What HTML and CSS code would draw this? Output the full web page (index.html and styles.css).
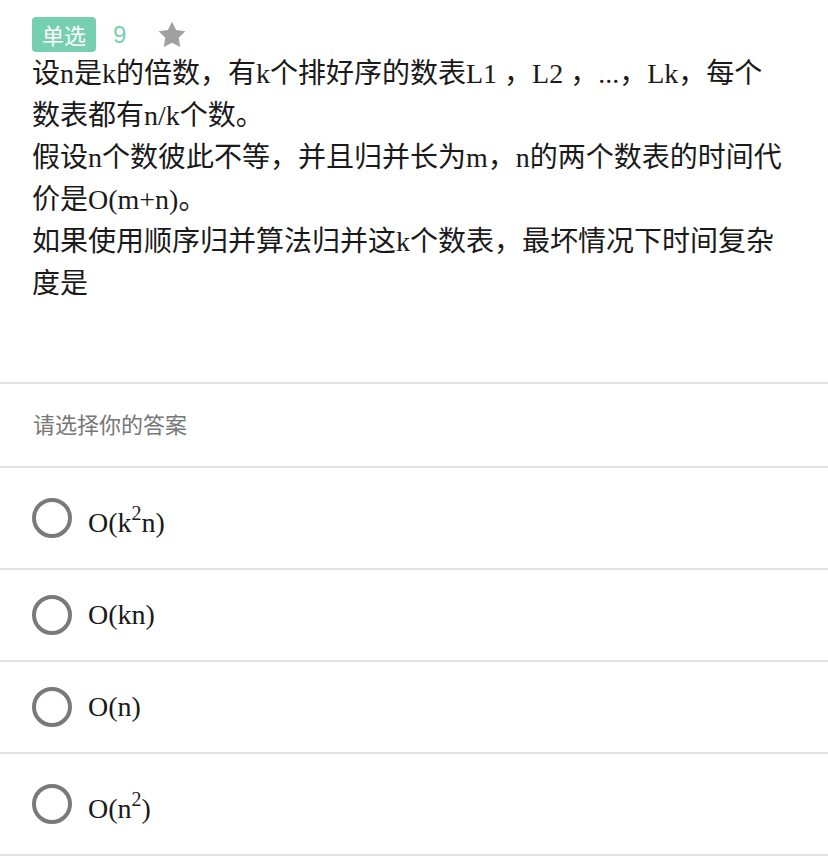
FILE: index.html
```
<!DOCTYPE html>
<html lang="zh">
<head>
<meta charset="utf-8">
<link rel="stylesheet" href="styles.css">
</head>
<body>
<section class="question">
  <div class="head">
    <span class="tag">单选</span>
    <span class="num">9</span>
    <svg class="star" viewBox="0 0 24 24" width="32" height="32"><path d="M12 2l3.09 6.26L22 9.27l-5 4.87 1.18 6.88L12 17.77l-6.18 3.25L7 14.14 2 9.27l6.91-1.01L12 2z" fill="#a0a0a0"/></svg>
  </div>
  <div class="stem">
    <p>设n是k的倍数，有k个排好序的数表L1 ，L2 ，...，Lk，每个数表都有n/k个数。</p>
    <p>假设n个数彼此不等，并且归并长为m，n的两个数表的时间代价是O(m+n)。</p>
    <p>如果使用顺序归并算法归并这k个数表，最坏情况下时间复杂度是</p>
  </div>
</section>
<div class="prompt">请选择你的答案</div>
<ul class="options">
  <li class="option"><span class="radio"></span><span class="label">O(k<sup>2</sup>n)</span></li>
  <li class="option"><span class="radio"></span><span class="label">O(kn)</span></li>
  <li class="option"><span class="radio"></span><span class="label">O(n)</span></li>
  <li class="option"><span class="radio"></span><span class="label">O(n<sup>2</sup>)</span></li>
</ul>
</body>
</html>
```
FILE: styles.css
```
* { box-sizing: border-box; }
body {
  margin: 0;
  background: #fff;
  font-family: "Liberation Serif", "Noto Sans CJK SC", serif;
  color: #1a1a1a;
}
.question {
  padding: 17px 40px 77px 32px;
  border-bottom: 2px solid #e2e2e2;
}
.head {
  display: flex;
  align-items: center;
  height: 35px;
  margin-bottom: 1px;
}
.tag {
  background: #77cfb1;
  color: #fff;
  font-family: "Noto Sans CJK SC", sans-serif;
  font-size: 22px;
  line-height: 35px;
  height: 35px;
  padding: 0 10px;
  border-radius: 4px;
}
.num {
  color: #77cfb1;
  font-family: "Liberation Sans", sans-serif;
  font-size: 24px;
  margin-left: 17px;
}
.star {
  margin-left: 30px;
}
.stem {
  font-size: 28px;
  line-height: 42px;
}
.stem p { margin: 0; }
.prompt {
  font-family: "Noto Sans CJK SC", sans-serif;
  font-size: 22px;
  color: #777;
  line-height: 30px;
  padding: 24px 33px 28px;
  border-bottom: 2px solid #e2e2e2;
}
.options {
  list-style: none;
  margin: 0;
  padding: 0;
}
.option {
  display: flex;
  align-items: center;
  padding: 25px 32px;
  border-bottom: 2px solid #e2e2e2;
}
.radio {
  width: 40px;
  height: 40px;
  border: 4px solid #7a7a7a;
  border-radius: 50%;
  flex: none;
}
.label {
  margin-left: 16px;
  font-size: 28px;
  line-height: 40px;
  color: #1a1a1a;
}
.label sup {
  font-size: 20px;
  vertical-align: 12px;
}
```
